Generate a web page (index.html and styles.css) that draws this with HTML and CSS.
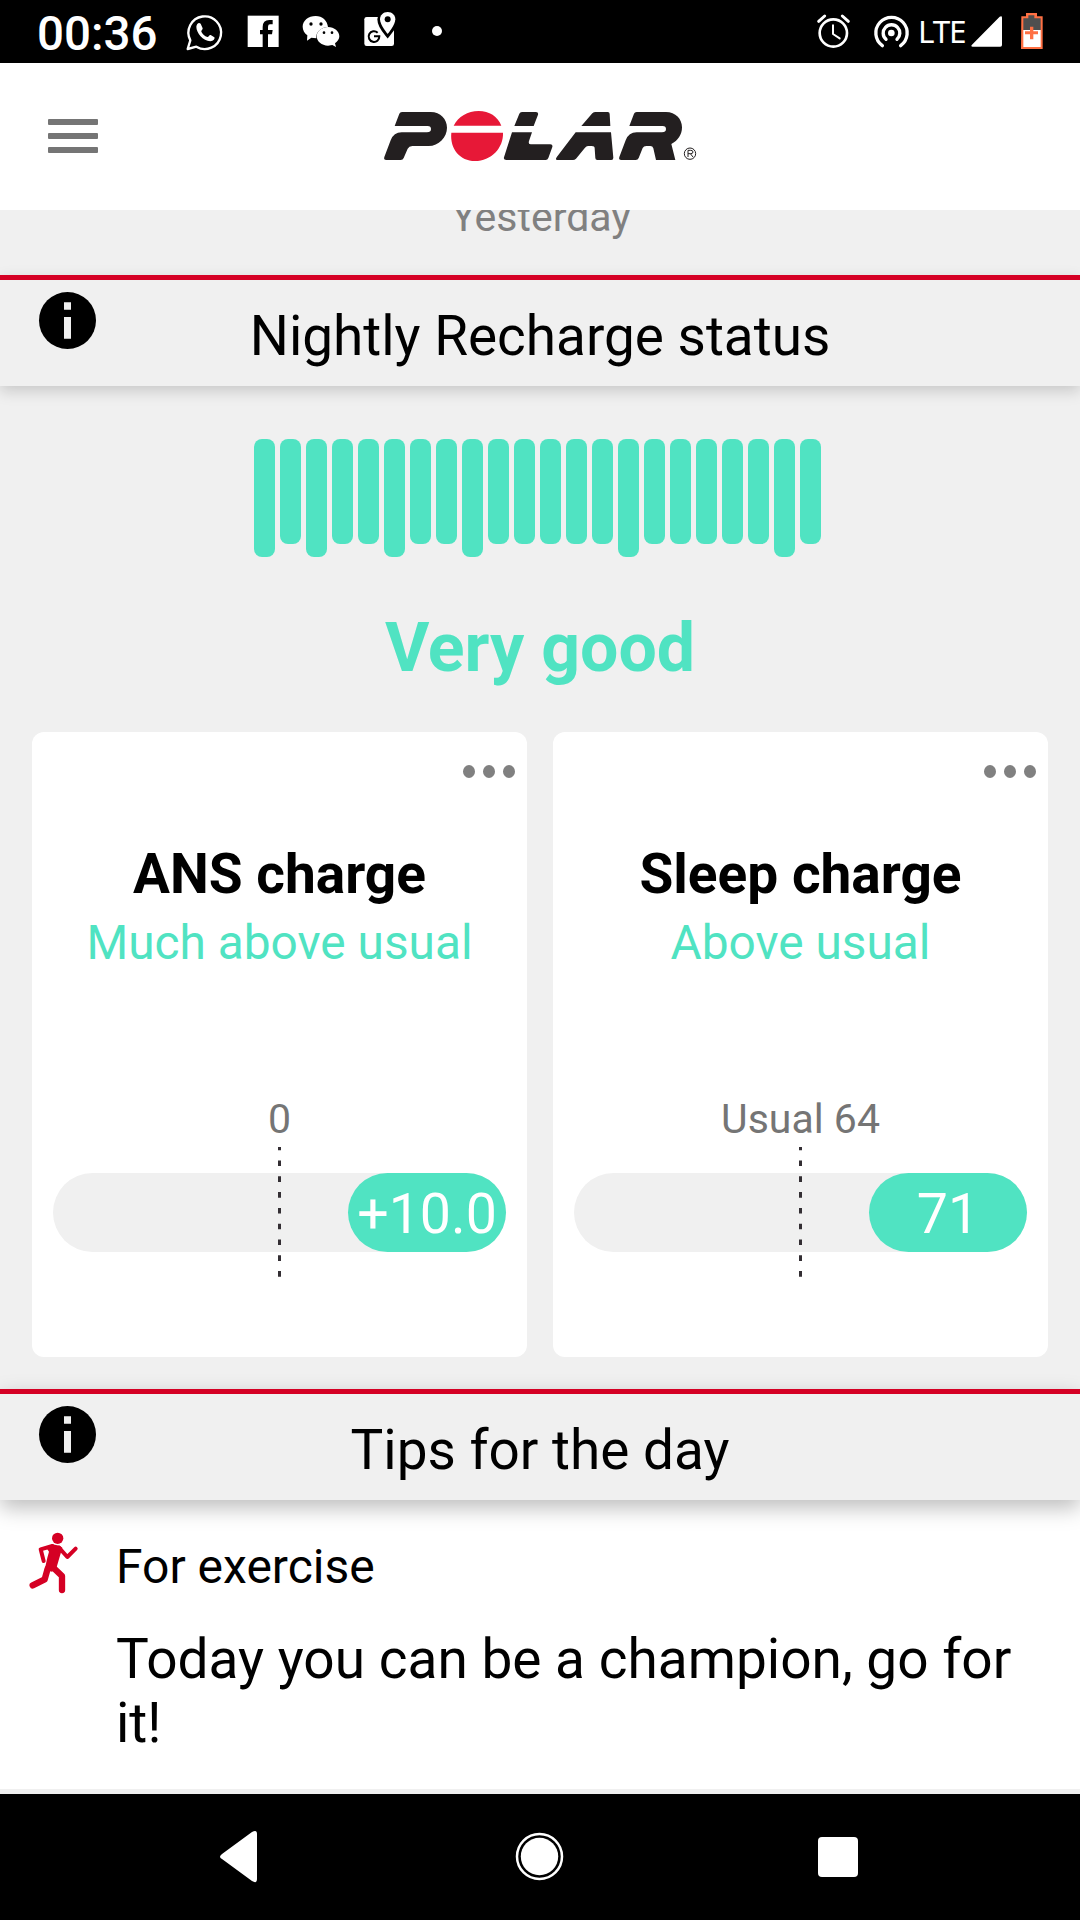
FILE: index.html
```html
<!DOCTYPE html>
<html lang="en">
<head>
<meta charset="utf-8">
<title>Polar Flow</title>
<link rel="stylesheet" href="styles.css">
</head>
<body>
<div class="status-bar">
  <span class="clock">00:36</span>
  <svg width="50" height="64" viewBox="555 0 150 192"><path d="M563 147l8-26a49 49 0 1 1 18 19z" fill="none" stroke="#fff" stroke-width="7" stroke-linejoin="round"/><path d="M589 80c1-10 8-14 13-9l6 14c1 3-5 7-4 10 4 8 10 13 18 16 4 1 6-8 10-6l11 7c3 3-3 12-12 12-22-2-42-25-42-44z" fill="#fff"/></svg>
  <svg width="55" height="64" viewBox="705 0 165 192"><path d="M743 47h93v94h-93z" fill="#fff"/><path d="M788 142v-39h-8V90h8v-9q0-21 20-21h10v13h-8q-6 0-6 7v10h14l-2 13h-12v39z" fill="#000"/></svg>
  <svg width="60" height="64" viewBox="870 0 180 192"><path d="M947 48c-22 0-39 14-39 32 0 11 6 20 14 26l-1 16 13-9 15 2c-2-18 13-33 35-34-2-19-17-33-37-33z" fill="#fff"/><path d="M984 81c-19 0-34 13-34 28s15 28 34 28l13-2 11 6-3-11c8-6 13-13 13-21 0-15-15-28-34-28z" fill="#fff"/><g fill="#000"><circle cx="933" cy="72" r="5"/><circle cx="963" cy="72" r="5"/><circle cx="972" cy="98" r="4"/><circle cx="996" cy="98" r="4"/></g></svg>
  <svg width="60" height="64" viewBox="1050 0 180 192"><rect x="1093" y="51" width="89" height="87" rx="7" fill="#fff"/><path d="M1163 36c-14 0-23 10-23 22 0 18 23 45 23 45s23-27 23-45c0-12-9-22-23-22z" fill="#fff" stroke="#000" stroke-width="16"/><path d="M1185 44h12v55h-12z" fill="#000"/><path d="M1163 36c-14 0-23 10-23 22 0 18 23 44 23 44s23-26 23-44c0-12-9-22-23-22z" fill="#fff"/><circle cx="1163" cy="58" r="9" fill="#000"/><path d="M1133 98a16 16 0 1 0 5 11h-16" fill="none" stroke="#000" stroke-width="6"/></svg>
  <svg width="50" height="64" viewBox="1230 0 150 192"><circle cx="1311" cy="93" r="15" fill="#fff"/></svg>
  <span class="spacer"></span>
  <svg width="50" height="64" viewBox="90 0 150 192" fill="none" stroke="#fff" stroke-linecap="round" stroke-linejoin="round"><circle cx="160" cy="99" r="41" stroke-width="8"/><path d="M116 64l18-16M187 48l18 16" stroke-width="9"/><path d="M159 76v26l20 13" stroke-width="6"/></svg>
  <svg width="55" height="64" viewBox="240 0 165 192" fill="none" stroke="#fff" stroke-width="10" stroke-linecap="round"><path d="M307 137a47 47 0 1 1 55 0M318 118a25 25 0 1 1 33 0"/><circle cx="334" cy="99" r="10" fill="#fff" stroke="none"/></svg>
  <span class="network">LTE</span>
  <svg width="41" height="64" viewBox="567 0 123 192"><path d="M576 134l83-84q7-4 7 3v82q0 5-5 5h-83q-7-1-2-6z" fill="#fff"/></svg>
  <svg width="70" height="64" viewBox="690 0 210 192"><path d="M724 49h14V39h33v10h17v98h-65z" fill="#ff7043"/><path d="M730 55h15V46h18v9h19v35h-52z" fill="#4f4f4f"/><path d="M730 90h52v51h-52z" fill="#fff"/><path d="M750 80h10v14h14v9h-14v15h-10v-15h-15v-9h15z" fill="#ff7043"/></svg>
</div>
<header class="app-bar">
  <button class="menu" aria-label="Menu"><i></i><i></i><i></i></button>
  <svg class="logo" width="360" height="90" viewBox="0 0 1080 270" role="img" aria-label="Polar">
    <g fill="#231f20">
      <path d="M104 108l14-37q2-5 8-5h86c30 0 49 22 49 47 0 29-25 55-55 55h-49q-10 0-14 8l-12 28q-2 6-9 6H79q-9 0-6-9l19-50q9-24 33-24h76q12 0 12-10t-12-9z"/>
      <path d="M463 108l15-37q2-5 8-5h42q8 0 6 8l-13 34zM456 127h60l-9 26q-3 10 6 10h58q8 0 6 8l-12 33q-2 6-8 6H439q-9 0-7-8z"/>
      <path d="M664 108l33-38q4-4 10-4h36q6 0 6 6l2 36zM647 127h106l7 76q0 7-6 7h-42q-6 0-6-6l-2-29q0-7-9-7h-11q-5 0-9 5l-27 33q-4 4-9 4h-44q-12 0-4-10z"/>
      <path d="M808 108l14-37q2-5 8-5h88c29 0 48 21 48 46 0 22-12 40-32 50l12 48h-58l-8-35q-2-7-9-7h-12q-8 0-11 6l-12 30q-2 6-9 6h-43q-9 0-6-9l19-50q9-24 33-24h76q12 0 12-10t-12-9z"/>
    </g>
    <path d="M281 107c14-27 42-44 75-44 32 0 57 16 68 44zM274 128h155c2 46-36 85-84 85-45 0-76-37-71-85z" fill="#e71837"/>
    <g fill="none" stroke="#231f20" stroke-width="3"><circle cx="990" cy="191" r="17"/><path d="M984 201v-20h8q7 0 7 5t-7 5h-8m7 0l8 10"/></g>
  </svg>
</header>
<main class="content">
  <div class="day"><span>Yesterday</span></div>
  <section>
    <div class="section-head soft">
      <svg class="info" width="58" height="58" viewBox="0 0 58 58"><circle cx="29.500" cy="29.500" r="28.500"/><path d="M26 11.300h7v7.500h-7zM26 26h7v21.700h-7z" fill="#f0f0f0"/></svg>
      <h2>Nightly Recharge status</h2>
    </div>
    <div class="bars">
      <i class="tall"></i><i></i><i class="tall"></i><i></i><i></i><i class="tall"></i><i></i><i></i><i class="tall"></i><i></i><i></i><i></i><i></i><i></i><i class="tall"></i><i></i><i></i><i></i><i></i><i></i><i class="tall"></i><i></i>
    </div>
    <p class="rating">Very good</p>
    <div class="cards">
      <article class="card">
        <div class="more"><i></i><i></i><i></i></div>
        <h3>ANS charge</h3>
        <p class="level">Much above usual</p>
        <p class="usual">0</p>
        <div class="gauge"><div class="track"><span class="value">+10.0</span></div><svg class="tick" width="3" height="131" viewBox="0 0 3 131"><path d="M1.500 0v3.300M1.500 13.500v117" stroke="#332e33" stroke-width="3" stroke-dasharray="5.600 10.200"/></svg></div>
      </article>
      <article class="card">
        <div class="more"><i></i><i></i><i></i></div>
        <h3>Sleep charge</h3>
        <p class="level">Above usual</p>
        <p class="usual">Usual 64</p>
        <div class="gauge"><div class="track"><span class="value">71</span></div><svg class="tick" width="3" height="131" viewBox="0 0 3 131"><path d="M1.500 0v3.300M1.500 13.500v117" stroke="#332e33" stroke-width="3" stroke-dasharray="5.600 10.200"/></svg></div>
      </article>
    </div>
  </section>
  <section>
    <div class="section-head">
      <svg class="info" width="58" height="58" viewBox="0 0 58 58"><circle cx="29.500" cy="29.500" r="28.500"/><path d="M26 11.300h7v7.500h-7zM26 26h7v21.700h-7z" fill="#f0f0f0"/></svg>
      <h2>Tips for the day</h2>
    </div>
    <div class="tips">
      <svg class="runner" width="50" height="62" viewBox="88 456 150 186" fill="none" stroke="#d50024" stroke-linecap="round" stroke-linejoin="round"><circle cx="174" cy="475" r="17" fill="#d50024" stroke="none"/><path d="M140 503l18-10 22 4 8 6-18 62-13 10-22-6 8-36 5-18z" fill="#d50024" stroke="none"/><path d="M158 498l-35 10 9 35" stroke-width="12"/><path d="M178 503l25 28 25-25" stroke-width="12"/><path d="M144 566l-9 32-36 18" stroke-width="19"/><path d="M158 560l29 28v42" stroke-width="19"/></svg>
      <div class="tip-body">
        <h4>For exercise</h4>
        <p>Today you can be a champion, go for<br>it!</p>
      </div>
    </div>
  </section>
</main>
<nav class="nav-bar">
  <svg width="1080" height="126" viewBox="0 0 1080 126"><path d="M222 60l30-22q5-3 5 2v45q0 5-5 2l-30-22q-4-2 0-5z" fill="#fff"/><circle cx="539.500" cy="62.500" r="22.500" fill="none" stroke="#fff" stroke-width="2.500"/><circle cx="539.500" cy="62.500" r="18.700" fill="#fff"/><rect x="818" y="43" width="40" height="40" rx="4" fill="#fff"/></svg>
</nav>
</body>
</html>
```
FILE: styles.css
```css
* { box-sizing: border-box; }
body {
  margin: 0;
  width: 1080px;
  height: 1920px;
  overflow: hidden;
  display: flex;
  flex-direction: column;
  background: #f0f0f0;
  color: #000;
  font-family: Roboto, sans-serif;
}
h2, h3, h4, p { margin: 0; font-weight: 400; }
svg { display: block; flex: none; }

.status-bar {
  display: flex;
  flex: none;
  height: 63px;
  overflow: hidden;
  background: #000;
  color: #fff;
}
.clock { width: 185px; padding-left: 37px; font-size: 47.500px; font-weight: 500; line-height: 69px; }
.spacer { flex: 1; }
.network { width: 54px; padding-left: 3px; font-family: "Noto Sans", sans-serif; font-size: 31.500px; letter-spacing: -1.200px; line-height: 61px; }

.app-bar {
  display: flex;
  flex: none;
  height: 147px;
  background: #fff;
}
.menu {
  display: flex;
  flex-direction: column;
  gap: 8px;
  width: 360px;
  padding: 56px 0 0 48px;
  border: 0;
  background: none;
}
.menu i { width: 50px; height: 6px; background: #757575; border-radius: 1px; }
.logo { margin-top: 27px; }

.content { flex: none; height: 1584px; overflow: hidden; }
.day {
  display: flex;
  justify-content: center;
  align-items: flex-end;
  height: 65px;
  overflow: hidden;
  padding: 0 0 34px 2px;
  color: #808080;
  font-size: 41px;
  line-height: 48px;
}
.section-head {
  display: grid;
  grid-template-columns: 98px 1fr 98px;
  height: 111px;
  border-top: 5px solid #d50024;
  background: #f0f0f0;
  box-shadow: 0 8px 20px rgba(0, 0, 0, .26);
  position: relative;
}
.section-head.soft { box-shadow: 0 5px 14px rgba(0, 0, 0, .17); }
.info { margin: 11px 0 0 38px; }
.section-head h2 { text-align: center; font-size: 54.900px; line-height: 112px; white-space: nowrap; }

.bars { display: flex; gap: 5px; height: 171px; padding: 53px 0 0 254px; }
.bars i { width: 21px; height: 105px; border-radius: 8px; background: #50e3c2; }
.bars .tall { height: 118px; }
.rating {
  margin-top: 50px;
  height: 125px;
  text-align: center;
  color: #50e3c2;
  font-size: 68px;
  font-weight: 700;
  line-height: 82px;
}
.cards { display: grid; grid-template-columns: 495px 495px; gap: 26px; padding: 0 32px 32px; }
.card { height: 625px; border-radius: 12px; background: #fff; text-align: center; }
.more { display: flex; justify-content: flex-end; gap: 8px; padding: 33px 12.500px 0 0; }
.more i { width: 12px; height: 13px; border-radius: 50%; background: #808080; }
.card h3 { margin-top: 63px; font-size: 55px; font-weight: 700; line-height: 66px; }
.level { margin-top: 4px; color: #50e3c2; font-size: 47.800px; line-height: 64px; }
.usual { margin-top: 116px; color: #757575; font-size: 41px; line-height: 56px; }
.gauge { position: relative; padding: 26px 21px 0; }
.track { display: flex; justify-content: flex-end; height: 79px; border-radius: 40px; background: #f0f0f0; }
.value { width: 158px; border-radius: 40px; background: #50e3c2; color: #fff; font-size: 55.500px; line-height: 84px; }
.tick { position: absolute; left: 246px; top: 0; }

.tips { display: flex; height: 289px; background: #fff; }
.runner { margin: 32px 0 0 29px; }
.tip-body { padding: 39px 0 0 37px; }
.tip-body h4 { font-size: 48px; line-height: 56px; }
.tip-body p { margin-top: 32px; font-size: 55px; line-height: 64px; white-space: nowrap; }

.nav-bar { flex: none; height: 126px; background: #000; }
```
